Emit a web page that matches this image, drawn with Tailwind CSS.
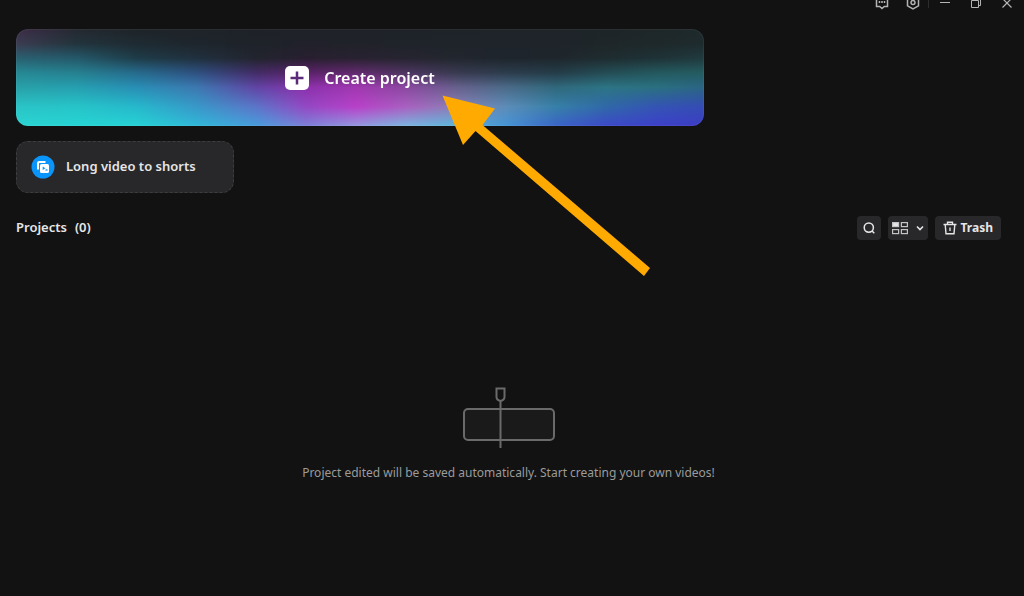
<!DOCTYPE html>
<html lang="en">
<head>
  <meta charset="UTF-8" />
  <meta name="viewport" content="width=device-width, initial-scale=1.0" />
  <title>Projects</title>
  <script src="https://cdn.jsdelivr.net/npm/@tailwindcss/browser@4"></script>
</head>
<body class="relative min-h-screen overflow-x-hidden bg-[#121212] text-[#e6e6e6] font-['Noto_Sans',sans-serif]">
  <!-- Window bar, partly scrolled off the top -->
  <header class="flex h-[13px] items-start justify-end gap-[15px] overflow-hidden pr-[9px] text-[#b4b4b4]">
    <button type="button" aria-label="Feedback" class="-mt-1 size-4">
      <svg viewBox="0 0 16 16" class="size-4" fill="none" stroke="currentColor" stroke-width="1.5">
        <path d="M2.5 1.5h11v9h-3.2L8 12.5l-2.3-2h-3.2z" /><path d="M5.5 5v2M8 5v2M10.5 5v2" />
      </svg>
    </button>
    <button type="button" aria-label="Settings" class="-mt-1 size-4">
      <svg viewBox="0 0 16 16" class="size-4" fill="none" stroke="currentColor" stroke-width="1.5">
        <path d="M8 .8l5.500 3v6L8 13 2.500 9.800v-6z" /><circle cx="8" cy="6.500" r="2" />
      </svg>
    </button>
    <div class="flex gap-2">
      <span class="-ml-2 h-2 w-px bg-[#2c2c2c]"></span>
      <button type="button" aria-label="Minimize" class="-mt-1 size-4">
        <svg viewBox="0 0 16 16" class="size-4" stroke="currentColor"><path d="M3 6.500h10" /></svg>
      </button>
    </div>
    <button type="button" aria-label="Restore" class="-mt-1 size-4">
      <svg viewBox="0 0 16 16" class="size-4" fill="none" stroke="currentColor"><path d="M3.500 4.500h7v7h-7zM5.500 4.500v-2h7v7h-2" /></svg>
    </button>
    <button type="button" aria-label="Close" class="-mt-1 size-4">
      <svg viewBox="0 0 16 16" class="size-4" stroke="currentColor" stroke-width="1.2"><path d="M3.500 2.500l9 9M12.500 2.500l-9 9" /></svg>
    </button>
  </header>

  <main class="pt-4 pr-[23px] pl-4">
    <button type="button" class="relative flex h-[97px] w-full max-w-[688px] items-center justify-center overflow-hidden rounded-xl bg-[#1e2228]">
      <canvas id="banner" width="688" height="97" class="absolute inset-0 h-full w-full"></canvas>
      <span class="absolute inset-0 rounded-xl border border-white/5"></span>
      <span class="relative flex items-center gap-[15px]">
        <svg viewBox="0 0 24 24" class="size-6">
          <rect width="24" height="24" rx="5" fill="#fff" />
          <path d="M12 5.500v13M5.500 12h13" stroke="#5b2a78" stroke-width="2.500" />
        </svg>
        <span class="text-base leading-6 font-semibold text-white">Create project</span>
      </span>
    </button>

    <button type="button" class="mt-[15px] flex h-[52px] w-[218px] items-center gap-[11px] rounded-xl border border-dashed border-[#3d3d40] bg-[#28282b] pl-[14px]">
      <svg viewBox="0 0 24 24" class="size-6">
        <circle cx="12" cy="12" r="11.500" fill="#0a95fb" />
        <path d="M7 14.500V8.300Q7 7 8.300 7h6.200" fill="none" stroke="#fff" stroke-width="2" />
        <rect x="9" y="9" width="9" height="9" rx="1.500" fill="#fff" />
        <path d="M11.700 11.500v3.400l2.700-1.700z" fill="#0a95fb" /><path d="M14.500 15h2" stroke="#0a95fb" stroke-width="1.300" />
      </svg>
      <span class="text-[13px] font-semibold">Long video to shorts</span>
    </button>

    <div class="mt-[23px] flex h-6 items-center justify-between">
      <h1 class="flex gap-2 text-[13px] font-semibold"><span>Projects</span><span>(0)</span></h1>
      <div class="flex gap-[7px]">
        <button type="button" aria-label="Search" class="flex size-6 items-center justify-center rounded bg-[#28282b]">
          <svg viewBox="0 0 14 14" class="size-[14px]" fill="none" stroke="currentColor" stroke-width="1.500">
            <circle cx="6.800" cy="6.600" r="4.600" /><path d="M10 10l2.300 2.300" />
          </svg>
        </button>
        <button type="button" aria-label="Change view" class="flex h-6 items-center gap-2 rounded bg-[#28282b] px-1">
          <svg viewBox="0 0 16 14" class="h-[14px] w-4" fill="none" stroke="#c4c4c4" stroke-width="1.200">
            <rect x=".6" y="1.600" width="6" height="4" fill="#e6e6e6" /><rect x="9.400" y="1.600" width="6" height="4" />
            <rect x=".6" y="8.600" width="6" height="4" /><rect x="9.400" y="8.600" width="6" height="4" />
          </svg>
          <svg viewBox="0 0 8 8" class="size-2" fill="none" stroke="currentColor" stroke-width="1.600"><path d="M1 2.500l3 3 3-3" /></svg>
        </button>
        <button type="button" class="flex h-6 items-center gap-1 rounded bg-[#28282b] px-2 text-xs font-bold">
          <svg viewBox="0 0 14 14" class="size-[14px]" fill="none" stroke="currentColor" stroke-width="1.400">
            <path d="M.5 3.500h13M4.500 3.500V1.200h5v2.300M2.200 3.500l.8 9.300h8l.8-9.300M7 6.500v3.500" />
          </svg>
          Trash
        </button>
      </div>
    </div>

    <section class="mt-[146px] flex flex-col items-center pb-8">
      <svg viewBox="0 0 94 64" class="h-16 w-[94px]" fill="none" stroke="#6a6a6a" stroke-width="2">
        <rect x="2" y="23" width="90" height="31" rx="4" fill="#1a1a1a" />
        <path d="M34.500 2.500h8v8.500q0 3-4 4-4-1-4-4zM38.500 15v47" />
      </svg>
      <p class="mt-[13px] text-xs leading-5 text-[#9b9b9b]">Project edited will be saved automatically. Start creating your own videos!</p>
    </section>
  </main>

  <!-- Pointer arrow -->
  <svg viewBox="0 0 210 184" class="pointer-events-none absolute top-[94px] left-[441px] h-[184px] w-[210px]" fill="#ffaa00">
    <path d="M1.500 1.500L54 14.500 41.500 31 209 174l-6 8L34.500 37 22 51z" />
  </svg>

  <script>
    // Banner colours: one row per column position, top to bottom
    const rows = [0, 0.15, 0.3, 0.45, 0.6, 0.8, 1];
    const mesh = [
      [0, '3c2c48 3b3c50 2a6070 268894 28a0a8 2ac4c6 2bd4d2'],
      [60, '252830 22343c 24586a 26808f 269fb0 26c4c8 26d4d4'],
      [120, '1e2428 1e2a32 1e3c48 266a8c 288eb4 26b8cc 26d2d4'],
      [180, '1e2328 1e252c 20303e 2e5080 3c78b0 3898c8 30b8d8'],
      [240, '1e2228 1e2229 22242e 432c66 6044a4 5c74c8 489cdc'],
      [290, '1e2228 20212a 281f30 5a2268 8c30ac 9448c4 7c80d8'],
      [340, '1e2228 20222a 282230 602a6c a038b0 b840c8 9498e0'],
      [390, '1e2228 1f232a 262430 4c3560 8a48a0 a860c0 7cb4e0'],
      [440, '1e2328 1e242a 22262e 383a50 66608c 8a80b4 5cb4dc'],
      [490, '1e2428 1e242a 1e252c 2c3c4c 4a6a88 5c8cb8 4494d4'],
      [540, '1e2428 1e242a 1e262c 243c48 30687c 3680a8 3a64c8'],
      [590, '1e2528 1e2629 1e2c30 244c54 2c7484 3068a8 3c48c8'],
      [640, '1e2628 1e282a 1e3236 24585e 2a7080 3454b4 3c40c8'],
      [688, '1e2a2c 1e2b2e 203a3e 245c60 2a6484 344cb4 3c3cc4']
    ].map(([x, list]) => ({ x, colors: list.split(' ').map(h => [0, 2, 4].map(i => parseInt(h.slice(i, i + 2), 16))) }));

    const ctx = document.getElementById('banner').getContext('2d');
    for (let x = 0; x < 688; x++) {
      const i = mesh.findIndex((m, n) => n > 0 && x < m.x);
      const a = mesh[i - 1], b = mesh[i];
      const t = (x - a.x) / (b.x - a.x);
      const grad = ctx.createLinearGradient(0, 0, 0, 97);
      rows.forEach((stop, r) => {
        const c = a.colors[r].map((v, k) => Math.round(v + (b.colors[r][k] - v) * t));
        grad.addColorStop(stop, `rgb(${c.join(',')})`);
      });
      ctx.fillStyle = grad;
      ctx.fillRect(x, 0, 1, 97);
    }
  </script>
</body>
</html>
